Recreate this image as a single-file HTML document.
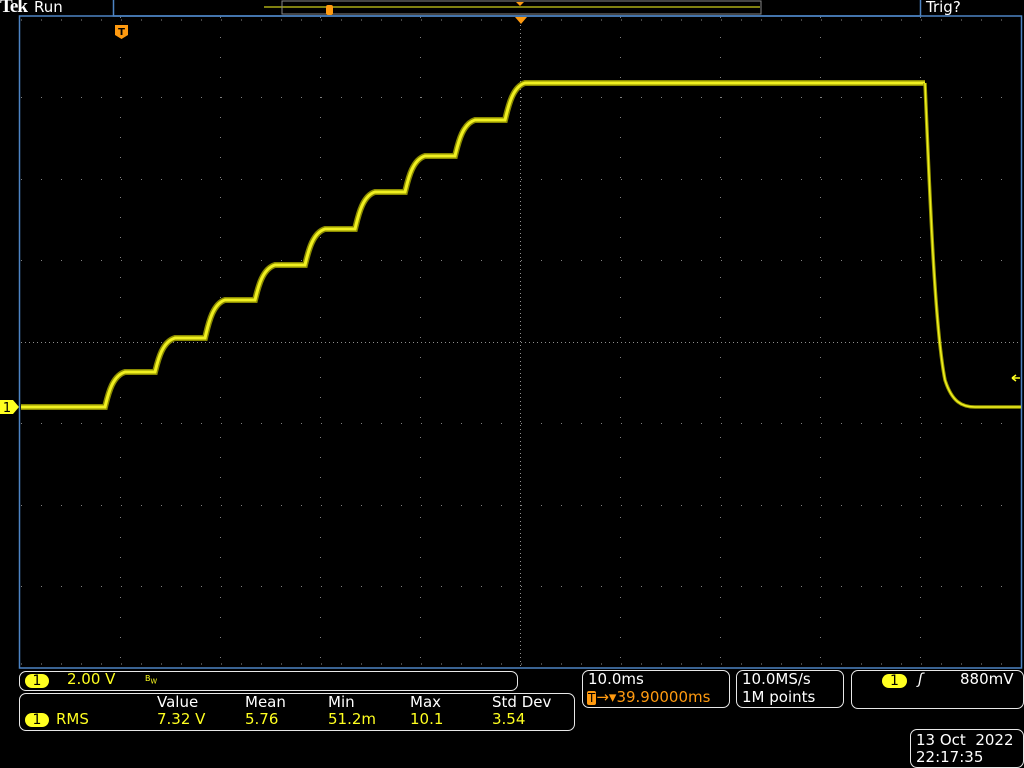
<!DOCTYPE html>
<html><head><style>
body{margin:0;background:#000;width:1024px;height:768px;overflow:hidden;position:relative;font-family:"DejaVu Sans","Liberation Sans",sans-serif;}
.t{position:absolute;white-space:pre;font-size:15px;line-height:17px}
.w{color:#fff}.y{color:#ffff20}.o{color:#ff9a10}
.box{position:absolute;border:1.5px solid #e8e8e8;border-radius:7px;box-sizing:border-box}
.pill{position:absolute;background:#ffff20;color:#000;border-radius:8px;font-size:14px;text-align:center;line-height:14px;height:14px;width:24px}
</style></head><body>
<svg width="1024" height="768" style="position:absolute;left:0;top:0">
<rect x="113.5" y="-1" width="807" height="17" fill="none" stroke="#4d84c4" stroke-width="1.5"/>
<line x1="264" y1="7" x2="760" y2="7" stroke="#ffff20" stroke-width="1"/>
<rect x="282" y="1" width="479" height="13" fill="none" stroke="#888" stroke-width="1"/>
<rect x="326" y="5" width="7" height="10" rx="2" fill="#ff9a10"/>
<path d="M516 2h8l-4 4z" fill="#ff9a10"/>
<rect x="19.5" y="16" width="1002" height="652" fill="none" stroke="#4d84c4" stroke-width="1.5"/>
<g stroke="#808080" stroke-width="1" stroke-dasharray="1 19">
<line x1="120.5" y1="17" x2="120.5" y2="668"/><line x1="220.5" y1="17" x2="220.5" y2="668"/><line x1="320.5" y1="17" x2="320.5" y2="668"/><line x1="420.5" y1="17" x2="420.5" y2="668"/><line x1="620.5" y1="17" x2="620.5" y2="668"/><line x1="720.5" y1="17" x2="720.5" y2="668"/><line x1="820.5" y1="17" x2="820.5" y2="668"/><line x1="920.5" y1="17" x2="920.5" y2="668"/>
</g>
<g stroke="#808080" stroke-width="1" stroke-dasharray="1 19">
<line x1="21" y1="97.5" x2="1020" y2="97.5"/><line x1="21" y1="179.5" x2="1020" y2="179.5"/><line x1="21" y1="260.5" x2="1020" y2="260.5"/><line x1="21" y1="423.5" x2="1020" y2="423.5"/><line x1="21" y1="505.5" x2="1020" y2="505.5"/><line x1="21" y1="586.5" x2="1020" y2="586.5"/>
</g>
<g stroke="#909090" stroke-width="1" stroke-dasharray="1 3">
<line x1="21" y1="342.5" x2="1020" y2="342.5"/><line x1="520.5" y1="17" x2="520.5" y2="668"/>
</g>
<g stroke="#909090" stroke-width="1" stroke-dasharray="1 19">
<line x1="21" y1="20" x2="1020" y2="20"/><line x1="21" y1="664" x2="1020" y2="664"/>
</g>
<path d="M515 17h12l-6 7z" fill="#ff9a10"/>
<path d="M115 25h13v10l-6.5 4-6.5-4z" fill="#ff9a10"/>
<text x="121.5" y="35" fill="#000" font-size="10" font-weight="bold" text-anchor="middle" font-family="DejaVu Sans">T</text>
<path d="M21 407 H105 C108 395,112 376,125 372 H155 C158 360,162 342,175 338 H205 C208 326,212 304,225 300 H255 C258 288,262 269,275 265 H305 C308 253,312 233,325 229 H355 C358 217,362 196,375 192 H405 C408 180,412 160,425 156 H455 C458 144,462 124,475 120 H505 C508 108,512 87,525 83 H925" fill="none" stroke="#8a8a00" stroke-width="6"/>
<path d="M21 407 H105 C108 395,112 376,125 372 H155 C158 360,162 342,175 338 H205 C208 326,212 304,225 300 H255 C258 288,262 269,275 265 H305 C308 253,312 233,325 229 H355 C358 217,362 196,375 192 H405 C408 180,412 160,425 156 H455 C458 144,462 124,475 120 H505 C508 108,512 87,525 83 H925" fill="none" stroke="#f0f020" stroke-width="3"/>
<path d="M925 83 C930 200,935 330,945 380 C952 402,962 407,975 407 H1021" fill="none" stroke="#9a9a00" stroke-width="3.5"/>
<path d="M925 83 C930 200,935 330,945 380 C952 402,962 407,975 407 H1021" fill="none" stroke="#f0f020" stroke-width="1.5"/>
<path d="M0 400h13l6 7-6 7h-13z" fill="#ffff20"/>
<text x="7" y="412" fill="#000" font-size="13" text-anchor="middle">1</text>
<path d="M1012 378h8M1012 378l4-3M1012 378l4 3" stroke="#ffff20" stroke-width="1.5" fill="none"/>
</svg>
<div class="t w" style="left:0;top:-2px;font-size:19px;font-family:'Liberation Serif',serif;font-weight:bold;letter-spacing:-1px">Tek</div>
<div class="t w" style="left:34px;top:-1px;font-size:15px">Run</div>
<div class="t w" style="left:926px;top:-1px;font-size:15px">Trig?</div>

<div class="box" style="left:19px;top:671px;width:499px;height:20px"></div>
<div class="pill" style="left:25px;top:674px">1</div>
<div class="t y" style="left:67px;top:671px">2.00 V</div>
<div class="t y" style="left:145px;top:674px;font-size:8px;line-height:10px">B<sub>W</sub></div>

<div class="box" style="left:19px;top:693px;width:556px;height:38px"></div>
<div class="t w" style="left:157px;top:694px">Value</div>
<div class="t w" style="left:245px;top:694px">Mean</div>
<div class="t w" style="left:328px;top:694px">Min</div>
<div class="t w" style="left:410px;top:694px">Max</div>
<div class="t w" style="left:492px;top:694px">Std Dev</div>
<div class="pill" style="left:25px;top:713px">1</div>
<div class="t y" style="left:56px;top:711px">RMS</div>
<div class="t y" style="left:157px;top:711px">7.32 V</div>
<div class="t y" style="left:245px;top:711px">5.76</div>
<div class="t y" style="left:328px;top:711px">51.2m</div>
<div class="t y" style="left:410px;top:711px">10.1</div>
<div class="t y" style="left:492px;top:711px">3.54</div>

<div class="box" style="left:582px;top:670px;width:148px;height:38px"></div>
<div class="t w" style="left:588px;top:671px">10.0ms</div>
<div class="t o" style="left:587px;top:689px"><span style="background:#ff9a10;color:#000;font-size:12px;border-radius:2px;padding:0 1px">T</span>→▾39.90000ms</div>

<div class="box" style="left:736px;top:670px;width:108px;height:38px"></div>
<div class="t w" style="left:742px;top:671px">10.0MS/s</div>
<div class="t w" style="left:742px;top:689px">1M points</div>

<div class="box" style="left:851px;top:670px;width:173px;height:39px"></div>
<div class="pill" style="left:882px;top:674px;width:25px">1</div>
<div class="t w" style="left:918px;top:671px;font-style:italic">ʃ</div>
<div class="t w" style="left:960px;top:671px">880mV</div>

<div class="box" style="left:910px;top:729px;width:114px;height:39px"></div>
<div class="t w" style="left:916px;top:732px">13 Oct  2022</div>
<div class="t w" style="left:916px;top:749px">22:17:35</div>
</body></html>
